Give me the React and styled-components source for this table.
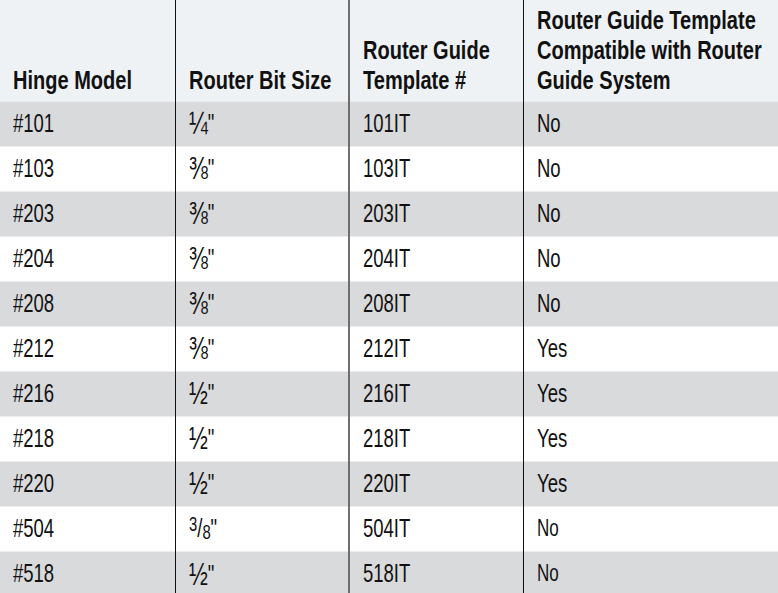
import styled, { createGlobalStyle } from "styled-components";

const GlobalStyle = createGlobalStyle`
  html, body {
    margin: 0;
    padding: 0;
    background: #ffffff;
  }
  body {
    font-family: "Liberation Sans", Arial, sans-serif;
    color: #111;
  }
`;

const rows = [
  ["#101", "¼", "101IT", "No"],
  ["#103", "⅜", "103IT", "No"],
  ["#203", "⅜", "203IT", "No"],
  ["#204", "⅜", "204IT", "No"],
  ["#208", "⅜", "208IT", "No"],
  ["#212", "⅜", "212IT", "Yes"],
  ["#216", "½", "216IT", "Yes"],
  ["#218", "½", "218IT", "Yes"],
  ["#220", "½", "220IT", "Yes"],
  ["#504", "split", "504IT", "No", true],
  ["#518", "½", "518IT", "No", true],
];

export default function App() {
  return (
    <>
      <GlobalStyle />
      <Table>
        <colgroup>
          <col style={{ width: 175 }} />
          <col style={{ width: 174 }} />
          <col style={{ width: 174 }} />
          <col />
        </colgroup>
        <thead>
          <tr>
            <HeadCell>
              <Narrow $head>Hinge Model</Narrow>
            </HeadCell>
            <HeadCell>
              <Narrow $head>Router Bit Size</Narrow>
            </HeadCell>
            <HeadCell $mid>
              <Narrow $head>
                Router Guide
                <br />
                Template #
              </Narrow>
            </HeadCell>
            <HeadCell>
              <Narrow $head>
                Router Guide Template
                <br />
                Compatible with Router
                <br />
                Guide System
              </Narrow>
            </HeadCell>
          </tr>
        </thead>
        <tbody>
          {rows.map(([model, bit, tpl, compat, small], i) => (
            <Row key={model} $shaded={i % 2 === 0}>
              <Cell>
                <Narrow>{model}</Narrow>
              </Cell>
              <Cell>
                <Narrow>
                  {bit === "split" ? (
                    <>
                      <Sup>3</Sup>/<Sub>8</Sub>"
                    </>
                  ) : (
                    <>
                      <Frac>{bit}</Frac>"
                    </>
                  )}
                </Narrow>
              </Cell>
              <Cell $mid>
                <Narrow>{tpl}</Narrow>
              </Cell>
              <Cell>
                <Narrow $small={small}>{compat}</Narrow>
              </Cell>
            </Row>
          ))}
        </tbody>
      </Table>
    </>
  );
}

const Table = styled.table`
  width: 778px;
  border-collapse: collapse;
  table-layout: fixed;
`;

const HeadCell = styled.th`
  height: 101px;
  box-sizing: border-box;
  padding: 0 0 6px 13px;
  background: #eff2f5;
  text-align: left;
  vertical-align: bottom;
  white-space: nowrap;
  overflow: hidden;
  border-left: ${(p) => (p.$mid ? "2px solid #6e6e6e" : "1px solid #111")};

  &:first-child {
    border-left: none;
  }
`;

const Row = styled.tr`
  background: ${(p) => (p.$shaded ? "#d9dadc" : "#ffffff")};
  border-top: 1px solid #ececee;
`;

const Cell = styled.td`
  height: 45px;
  box-sizing: border-box;
  padding: 0 0 0 13px;
  vertical-align: middle;
  white-space: nowrap;
  overflow: hidden;
  border-left: ${(p) => (p.$mid ? "2px solid #6e6e6e" : "1px solid #111")};

  &:first-child {
    border-left: none;
  }
`;

/* condensed face: the sandbox has no narrow family, so squeeze Liberation Sans */
const Narrow = styled.span`
  display: inline-block;
  transform: scaleX(${(p) => (p.$head ? 0.77 : 0.74)});
  transform-origin: left center;
  font-size: ${(p) => (p.$head ? "26px" : p.$small ? "23px" : "25px")};
  font-weight: ${(p) => (p.$head ? 700 : 400)};
  line-height: ${(p) => (p.$head ? "30px" : "1")};
  color: #111;
`;

const Frac = styled.span`
  font-size: 1.22em;
  line-height: 1;
  vertical-align: -0.06em;
`;

const Sup = styled.span`
  font-size: 0.8em;
  vertical-align: 0.3em;
`;

const Sub = styled.span`
  font-size: 0.8em;
  vertical-align: -0.12em;
`;
